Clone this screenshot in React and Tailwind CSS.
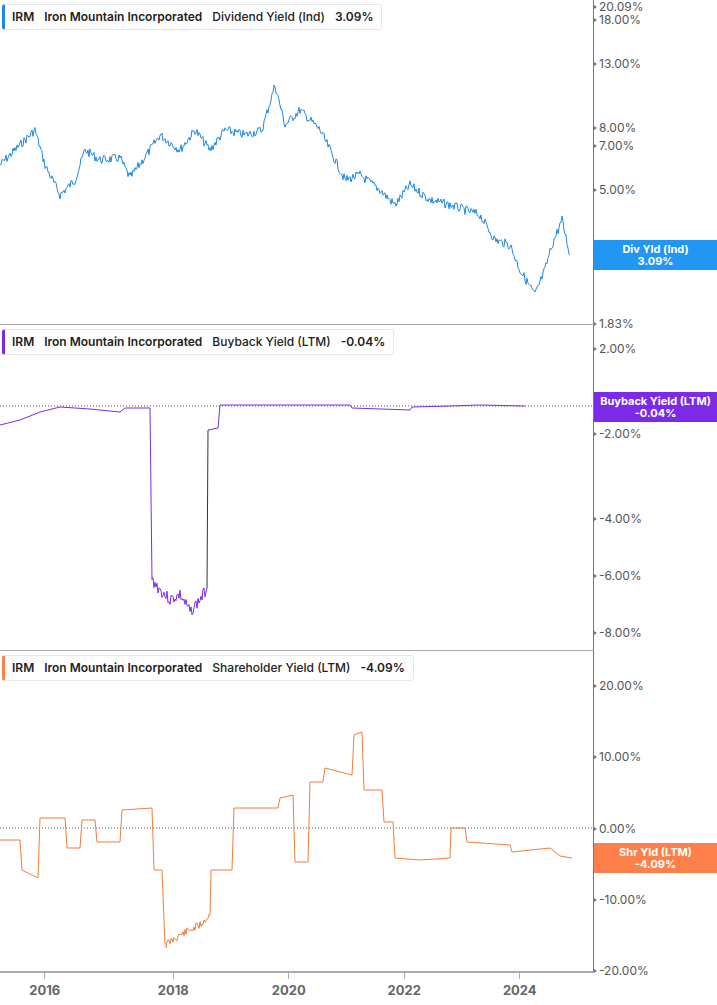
import React from "react";

function noisy(pts, amp, seed, step = 1, dy = 0) {
  let s = seed;
  const rnd = () => { s = (s * 9301 + 49297) % 233280; return s / 233280 - 0.5; };
  const out = [];
  for (let i = 0; i < pts.length - 1; i++) {
    const [x1, y1] = pts[i], [x2, y2] = pts[i + 1];
    const n = Math.max(1, Math.round((x2 - x1) / step));
    for (let k = 0; k < n; k++) {
      const t = k / n;
      out.push([x1 + (x2 - x1) * t, y1 + (y2 - y1) * t + rnd() * amp]);
    }
  }
  out.push(pts[pts.length - 1]);
  return out.map(p => p[0].toFixed(1) + "," + (p[1] - dy).toFixed(1)).join(" ");
}
const toStr = (a, dy) => a.map(p => p[0] + "," + (p[1] - dy)).join(" ");

const blue = [[0,165],[15,150],[35,130],[45,165],[60,195],[75,180],[85,150],[100,160],[120,158],[130,178],[150,150],[160,135],[180,150],[195,130],[210,150],[225,130],[245,135],[262,130],[275,85],[285,125],[300,110],[320,130],[330,150],[345,180],[360,175],[380,190],[395,205],[410,185],[430,200],[450,205],[465,210],[480,215],[495,240],[510,245],[520,270],[535,295],[545,270],[552,245],[562,220],[570,255]];
const purpleA = [[0,425],[20,420],[40,412],[60,407],[90,409],[120,412],[125,408],[150,408],[152,580]];
const purpleB = [[152,580],[160,590],[170,600],[180,595],[190,612],[200,600],[207,588]];
const purpleC = [[208,430],[218,428],[220,405],[350,405],[352,408],[410,410],[412,407],[450,406],[480,405],[525,406]];
const orangeStep = [[0,840],[20,840],[22,870],[38,878],[40,818],[65,818],[67,848],[80,848],[82,820],[95,820],[97,842],[120,842],[122,810],[152,808],[154,870],[162,870],[165,945]];
const orangeNoisy = [[165,945],[180,935],[200,925],[210,915]];
const orangeStep2 = [[210,915],[211,870],[232,870],[234,808],[278,808],[280,798],[293,795],[295,862],[308,862],[310,782],[323,782],[325,768],[352,775],[354,735],[362,732],[364,790],[382,790],[384,822],[393,822],[395,858],[420,860],[450,858],[451,828],[465,828],[467,842],[510,845],[512,852],[550,848],[560,856],[572,858]];

function Legend({ color, metric, value }) {
  return (
    <div className="absolute top-1 left-[2px] flex items-center h-[26px] bg-white border border-[#e5e7eb] rounded-[3px] pr-2 text-[12px] font-semibold text-[#222] gap-[10px]" style={{ borderLeft: `3px solid ${color}` }}>
      <span className="pl-[7px]">IRM</span>
      <span>Iron Mountain Incorporated</span>
      <span className="font-medium">{metric}</span>
      <span>{value}</span>
    </div>
  );
}

function Panel({ top, h, legend, labels, badge, children }) {
  return (
    <div className="flex" style={{ height: h }}>
      <div className="relative w-[594px] h-full border-r border-[#777]">
        <svg className="absolute inset-0" width="594" height={h}>{children}</svg>
        {legend}
      </div>
      <div className="relative flex-1 h-full">
        {labels.map(([t, y]) => (
          <div key={t} className="absolute left-0 flex items-center gap-[2px] text-[12px] text-[#555] leading-[14px]" style={{ top: y - top - 7 }}>
            <span className="w-0 h-0 border-y-[2px] border-y-transparent border-l-[3px] border-l-[#777]" />
            <span>{t}</span>
          </div>
        ))}
        {badge && (
          <div className="absolute left-0 w-full h-[30px] flex flex-col items-center justify-center text-white text-[11px] font-bold leading-[12px]" style={{ top: badge.y - top, background: badge.bg }}>
            <span>{badge.l1}</span><span>{badge.l2}</span>
          </div>
        )}
      </div>
    </div>
  );
}

export default function App() {
  return (
    <div className="w-[717px] h-[1005px] bg-white overflow-hidden flex flex-col" style={{ fontFamily: "Inter, 'Liberation Sans', sans-serif" }}>
      <Panel top={0} h={325}
        legend={<Legend color="#1e88e5" metric="Dividend Yield (Ind)" value="3.09%" />}
        labels={[["20.09%", 7], ["18.00%", 20], ["13.00%", 64], ["8.00%", 128], ["7.00%", 146], ["5.00%", 190], ["3.00%", 258], ["1.83%", 324]]}
        badge={{ y: 240, bg: "#2196f3", l1: "Div Yld (Ind)", l2: "3.09%" }}>
        <line x1="0" y1="324.5" x2="594" y2="324.5" stroke="#aaa" />
        <polyline points={noisy(blue, 9, 7, 1, 0)} fill="none" stroke="#1e88e5" strokeWidth="1" />
      </Panel>
      <Panel top={325} h={326}
        legend={<Legend color="#7c2ae8" metric="Buyback Yield (LTM)" value="-0.04%" />}
        labels={[["2.00%", 349], ["-2.00%", 434], ["-4.00%", 519], ["-6.00%", 576], ["-8.00%", 633]]}
        badge={{ y: 392, bg: "#7c2ae8", l1: "Buyback Yield (LTM)", l2: "-0.04%" }}>
        <line x1="0" y1="325.5" x2="594" y2="325.5" stroke="#aaa" />
        <line x1="0" y1="81" x2="594" y2="81" stroke="#555" strokeDasharray="1 2" />
        <polyline points={toStr(purpleA, 325)} fill="none" stroke="#7c2ae8" />
        <polyline points={noisy(purpleB, 12, 3, 1, 325)} fill="none" stroke="#7c2ae8" />
        <line x1="207" y1="263" x2="208" y2="105" stroke="#333" />
        <polyline points={toStr(purpleC, 325)} fill="none" stroke="#7c2ae8" />
      </Panel>
      <Panel top={651} h={322}
        legend={<Legend color="#ff7f4a" metric="Shareholder Yield (LTM)" value="-4.09%" />}
        labels={[["20.00%", 686], ["10.00%", 757], ["0.00%", 829], ["-10.00%", 900], ["-20.00%", 971]]}
        badge={{ y: 843, bg: "#ff7f4a", l1: "Shr Yld (LTM)", l2: "-4.09%" }}>
        <line x1="0" y1="321" x2="594" y2="321" stroke="#aaa" strokeWidth="2" />
        <line x1="0" y1="177" x2="594" y2="177" stroke="#555" strokeDasharray="1 2" />
        <polyline points={toStr(orangeStep, 651)} fill="none" stroke="#f47c3c" />
        <polyline points={noisy(orangeNoisy, 8, 11, 1, 651)} fill="none" stroke="#f47c3c" />
        <polyline points={toStr(orangeStep2, 651)} fill="none" stroke="#f47c3c" />
      </Panel>
      <div className="w-[594px] grid grid-cols-[repeat(5,115.5px)] pl-[-26px] text-[13px] font-bold text-[#666]">
        {["2016", "2018", "2020", "2022", "2024"].map((t, i) => (
          <div key={t} className={"flex flex-col items-center " + (i === 0 ? "-ml-[26px]" : "")}>
            <span className="w-px h-[6px] bg-[#aaa]" />
            <span className="mt-[4px] leading-[14px]">{t}</span>
          </div>
        ))}
      </div>
    </div>
  );
}
